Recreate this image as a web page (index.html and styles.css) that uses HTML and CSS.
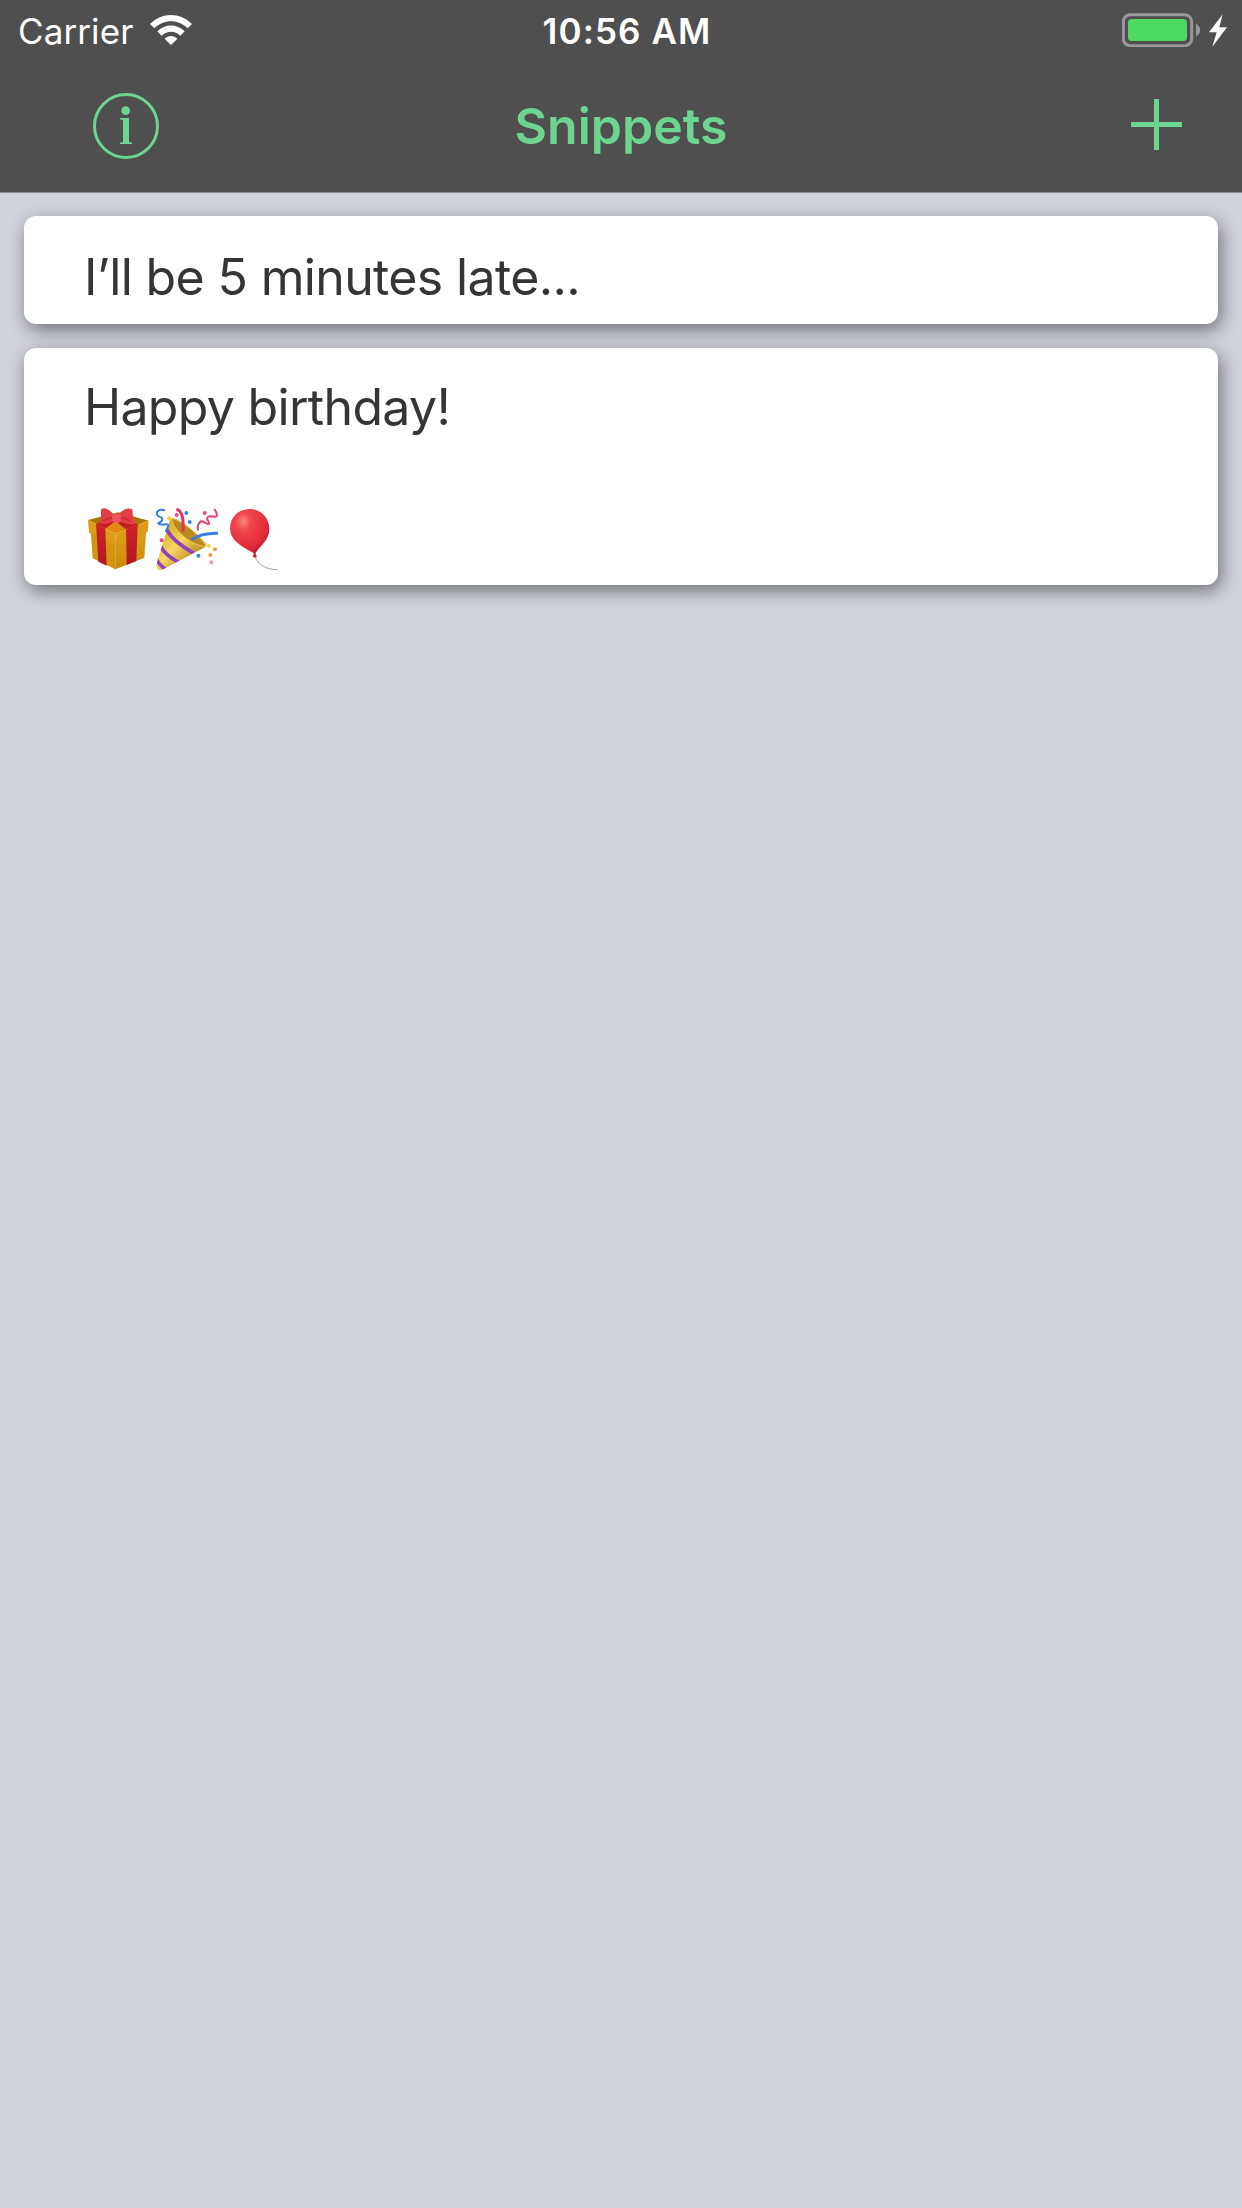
FILE: index.html
```html
<!DOCTYPE html>
<html lang="en">
<head>
<meta charset="utf-8">
<title>Snippets</title>
<link rel="stylesheet" href="styles.css">
</head>
<body>
<header class="header">
  <div class="status">
    <div class="status-left">
      <span class="carrier">Carrier</span>
      <svg class="wifi" viewBox="0 0 126 90" fill="#fff"><path d="M0 27C37-9 89-9 126 27L113 40C84 12 42 12 13 40ZM22 49C46 26 80 26 104 49L91 62C75 46 51 46 35 62ZM44 71C55 60 71 60 82 71L63 90Z"/></svg>
    </div>
    <time class="clock">10:56 AM</time>
    <div class="status-right">
      <svg class="battery" viewBox="0 0 234 102"><rect x="4" y="5" width="205" height="93" rx="21" fill="none" stroke="#989898" stroke-width="9"/><rect x="18" y="18" width="177" height="66" rx="11" fill="#4cd964"/><path d="M222 32Q234 38 234 51Q234 64 222 70Z" fill="#989898"/></svg>
      <svg class="bolt" viewBox="0 0 54 98" fill="#fff"><path d="M41 0L0 54H23L10 98L54 39H31Z"/></svg>
    </div>
  </div>
  <nav class="nav">
    <button class="icon-button" aria-label="About"><svg class="info" viewBox="0 0 198 198" fill="#6ed491"><circle cx="99" cy="99" r="94.5" fill="none" stroke="#6ed491" stroke-width="9"/><circle cx="98" cy="53" r="13"/><path d="M81 75H108V147L117 149V153H81V149L90 147V82L81 79Z"/></svg></button>
    <h1 class="title">Snippets</h1>
    <button class="icon-button" aria-label="Add"><svg class="plus" viewBox="0 0 51 51" fill="#6ed491"><path d="M23 0H28V23H51V28H28V51H23V28H0V23H23Z"/></svg></button>
  </nav>
</header>
<main class="list">
  <article class="card"><p class="late">I’ll be 5 minutes late...</p></article>
  <article class="card tall">
    <p class="birthday">Happy birthday!</p>
    <div class="emoji-row">
      <svg class="gift" viewBox="54 51 183 189" role="img" aria-label="gift">
        <defs><linearGradient id="gold" x2="0" y2="1"><stop stop-color="#dca01c"/><stop offset="1" stop-color="#c98a09"/></linearGradient><linearGradient id="red" x2="0" y2="1"><stop stop-color="#cf2227"/><stop offset="1" stop-color="#ad1a20"/></linearGradient></defs>
        <path d="M62 120L136 155V238L68 205Z" fill="#d5940e"/><path d="M136 155L229 120L223 203L136 238Z" fill="url(#gold)"/>
        <path d="M54 90L145 67L236 92L136 131Z" fill="#a77808"/><path d="M100 110L145 82L200 98L136 131Z" fill="#e08a12"/>
        <path d="M54 90L136 131V167L57 128Z" fill="#dc9b18"/><path d="M236 92L136 131V167L233 126Z" fill="#d99c16"/>
        <path d="M78 102L106 116L110 227L85 215Z" fill="url(#red)"/><path d="M168 118L203 104L199 213L170 225Z" fill="url(#red)"/>
        <path d="M78 102L118 88L132 96L106 116ZM160 94L175 90L207 104L170 119L142 98Z" fill="#c01d22"/>
        <path d="M54 90L136 131L236 92" fill="none" stroke="#efb52c" stroke-width="2"/>
        <path d="M78 102L106 116M170 118L205 104" fill="none" stroke="#d2262b" stroke-width="4"/>
        <path d="M136 80C121 58 103 50 94 57C91 69 96 84 89 99C104 107 120 97 136 92Z" fill="#e43d46"/><path d="M142 80C154 58 176 52 187 58C186 73 193 88 197 102C177 107 158 96 142 92Z" fill="#e43d46"/>
        <path d="M101 92Q116 80 133 84M181 94Q165 81 147 84" fill="none" stroke="#b91e2b" stroke-width="3"/><rect x="126" y="72" width="27" height="26" rx="11" fill="#ef535b"/>
      </svg>
      <svg class="party" viewBox="33 51 186 189" role="img" aria-label="party popper">
        <defs><linearGradient id="cone" x1="0" y1=".3" x2=".7" y2="1"><stop stop-color="#d6a820"/><stop offset=".45" stop-color="#f8d661"/><stop offset="1" stop-color="#ab780e"/></linearGradient><clipPath id="coneClip"><path d="M76 86Q81 80 96 91L179 156Q188 165 179 172L52 239Q35 243 34 224Z"/></clipPath></defs>
        <path d="M76 86Q81 80 96 91L179 156Q188 165 179 172L52 239Q35 243 34 224Z" fill="url(#cone)"/>
        <g clip-path="url(#coneClip)" fill="none" stroke="#9141bd" stroke-width="11"><path d="M65 119Q84 155 147 190"/><path d="M47 169Q61 196 101 217"/><path d="M33 204Q40 224 64 239"/></g>
        <path d="M79 86C83 121 141 167 181 170C190 157 101 80 79 86Z" fill="#b88a20" stroke="#f3cd50" stroke-width="3"/>
        <path d="M94 58C111 61 117 83 114 125" fill="none" stroke="#df345d" stroke-width="9"/>
        <path d="M139 149Q168 129 219 130" fill="none" stroke="#397ee0" stroke-width="9"/>
        <path d="M60 61C37 54 29 72 41 79C51 82 60 88 40 100C47 110 72 96 70 108L62 126" fill="none" stroke="#357ade" stroke-width="6"/>
        <path d="M208 57C220 73 217 82 207 80C193 76 180 80 190 94C196 104 190 105 181 98C168 88 155 99 159 121" fill="none" stroke="#e44273" stroke-width="6"/>
        <g fill="#e64b82"><circle cx="95" cy="75" r="6"/><circle cx="179" cy="69" r="6"/><circle cx="50" cy="151" r="6"/></g><g fill="#3884d8"><circle cx="124" cy="69" r="6"/><circle cx="134" cy="96" r="6"/><circle cx="160" cy="197" r="6"/></g><g fill="#f2d337"><circle cx="73" cy="85" r="6"/><circle cx="191" cy="167" r="6"/></g><g fill="#ee9f3f"><circle cx="210" cy="178" r="6"/><circle cx="196" cy="195" r="6"/></g><circle cx="199" cy="217" r="6" fill="#f196b7"/>
      </svg>
      <svg class="balloon" viewBox="45 54 144 186" role="img" aria-label="balloon">
        <defs><radialGradient id="rubber" cx=".34" cy=".28" r=".78"><stop stop-color="#f98280"/><stop offset=".25" stop-color="#f0484f"/><stop offset=".75" stop-color="#e32b3a"/><stop offset="1" stop-color="#b91c2e"/></radialGradient></defs>
        <path d="M119 199C130 225 153 238 187 239" fill="none" stroke="#8c8989" stroke-width="2.5"/>
        <path d="M104 57C139 57 163 84 163 117C163 150 137 166 121 190Q119 193 115 189C95 176 45 158 45 115C45 83 69 57 104 57Z" fill="url(#rubber)"/><path d="M117 188H121L126 202H113Z" fill="#c72333"/>
      </svg>
    </div>
  </article>
</main>
</body>
</html>
```
FILE: styles.css
```css
* { box-sizing: border-box; margin: 0; padding: 0; }
body {
  min-height: 2208px;
  background: #d0d3dc;
  font-family: Inter, "Liberation Sans", sans-serif;
  color: #353535;
}
svg { display: block; flex: none; }
.header {
  height: 193px;
  background: #4f4f4f;
  border-bottom: 1px solid #8f9095;
  color: #fff;
}
.status {
  display: grid;
  grid-template-columns: 1fr auto 1fr;
  height: 60px;
  padding: 0 15px 0 18px;
  font-size: 35px;
  line-height: 62px;
}
.status-left, .status-right { display: flex; }
.status-left { gap: 16px; }
.status-right { justify-content: flex-end; gap: 9px; }
.carrier { width: 116px; white-space: nowrap; letter-spacing: .1px; }
.wifi { width: 42px; height: 30px; margin-top: 15px; }
.clock { font-weight: 600; letter-spacing: 1.1px; padding-left: 9px; white-space: nowrap; }
.battery { width: 78px; height: 34px; margin-top: 13px; }
.bolt { width: 18px; height: 33px; margin-top: 14px; }
.nav {
  display: grid;
  grid-template-columns: 1fr auto 1fr;
  align-items: center;
  height: 132px;
  padding: 0 60px;
}
.icon-button { border: 0; background: none; justify-self: start; padding-left: 33px; }
.icon-button:last-child { justify-self: end; padding: 0 0 3px; }
.info { width: 66px; height: 66px; }
.plus { width: 51px; height: 51px; }
.title { font-size: 50px; font-weight: 600; line-height: 60px; color: #6ed491; }
.list { display: grid; gap: 24px; padding: 23px 24px; }
.card {
  height: 108px;
  padding: 29px 60px 0;
  border-radius: 12px;
  background: #fff;
  box-shadow: 3px 6px 18px rgba(0, 0, 0, .46);
}
.card p { font-size: 50px; line-height: 65px; white-space: nowrap; }
.late { letter-spacing: -.64px; }
.birthday { letter-spacing: -.68px; }
.tall { height: 237px; padding-top: 27px; }
.emoji-row { display: flex; padding: 67px 0 0 4px; }
.gift { width: 61px; height: 63px; }
.party { width: 62px; height: 63px; margin-left: 7px; }
.balloon { width: 48px; height: 62px; margin: 1px 0 0 12px; }
```
